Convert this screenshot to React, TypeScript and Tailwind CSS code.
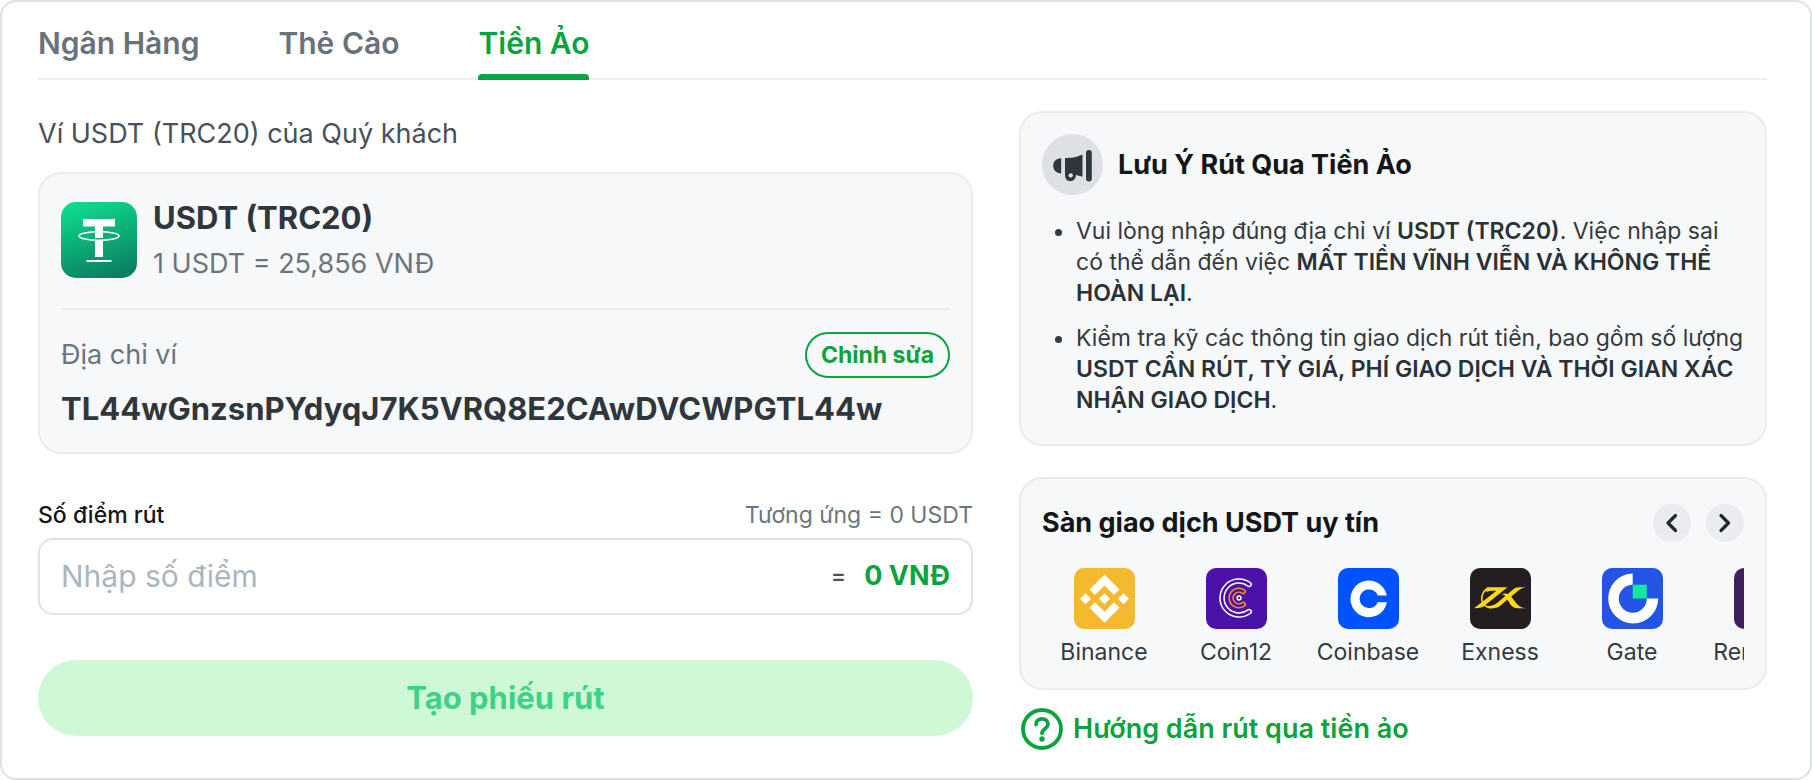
import { useRef, useState, type ReactNode } from "react";

function TetherLogo() {
  return (
    <svg viewBox="0 0 76 76" className="size-[76px] shrink-0" role="img" aria-label="USDT">
      <defs>
        <linearGradient id="tether" x1="0.35" y1="0" x2="0.65" y2="1">
          <stop offset="0" stopColor="#0fd88b" />
          <stop offset="1" stopColor="#0a7f63" />
        </linearGradient>
      </defs>
      <rect width="76" height="76" rx="15" fill="url(#tether)" />
      <path d="M22 17h32v7.600H42V36h-8V24.600H22z" fill="#fff" />
      <path d="M34 38h8v17h-8z" fill="#fff" />
      <ellipse cx="38" cy="34" rx="20" ry="4.200" fill="none" stroke="#fff" strokeWidth="1.500" />
      <path d="M25.500 58h25v1.900h-25z" fill="#fff" />
    </svg>
  );
}

function MegaphoneIcon() {
  return (
    <svg viewBox="0 0 61 61" className="size-[61px] shrink-0" aria-hidden="true">
      <circle cx="30.500" cy="30.500" r="30.500" fill="#dee0e5" />
      <g fill="#2f363c">
        <path d="M19.200 24.200v15.200c-5-.2-8-3.200-8-7.600s3-7.400 8-7.600z" />
        <path d="M23 24c6.500.2 12-.9 17.500-3.500v22.300L34 41c-.2 3.600-2.500 6.200-5.700 6.200S23 44.800 23 41z" />
        <rect x="44" y="16" width="5.800" height="31.500" rx="2.900" />
      </g>
      <path d="M26.600 41c1-.9 3.100-.9 4.200 0 0 1.500-.8 2.400-2.100 2.400s-2.100-.9-2.100-2.400z" fill="#dee0e5" />
      <circle cx="28.700" cy="41.200" r="2" fill="#dee0e5" />
    </svg>
  );
}

function BinanceLogo() {
  return (
    <svg viewBox="0 0 61 61" className="size-[61px]" aria-hidden="true">
      <rect width="61" height="61" rx="10" fill="#f3ba2f" />
      <g fill="#fff">
        <path d="M30.500 6.500 45.500 21.500l-5.500 5.500-9.500-9.500L21 27l-5.500-5.500z" />
        <path d="M30.500 54.800 45.500 39.800 40 34.300l-9.500 9.500-9.500-9.500-5.500 5.500z" />
        <path d="m30.500 25.200 5.500 5.500-5.500 5.500-5.500-5.500z" />
        <path d="m11.500 25.200 5.500 5.500-5.500 5.500L6 30.700z" />
        <path d="m49.500 25.200 5.500 5.500-5.500 5.500-5.500-5.500z" />
      </g>
    </svg>
  );
}

function Coin12Logo() {
  return (
    <svg viewBox="0 0 61 61" className="size-[61px]" aria-hidden="true">
      <rect width="61" height="61" rx="10" fill="#4c12a8" />
      <g fill="none" strokeLinecap="round">
        <path d="M43.200 16.400A17 17 0 1 0 43.200 43.600" stroke="#fff" strokeWidth="5.600" />
        <path d="M43.200 16.400A17 17 0 1 0 43.200 43.600" stroke="#4c12a8" strokeWidth="2.600" />
        <path d="M37.200 23.500A7.800 7.800 0 1 0 37.200 36.500" stroke="#f7931a" strokeWidth="5.600" />
        <path d="M37.200 23.500A7.800 7.800 0 1 0 37.200 36.500" stroke="#4c12a8" strokeWidth="2.400" />
      </g>
      <circle cx="33" cy="30" r="1.900" fill="none" stroke="#fff" strokeWidth="1.500" />
    </svg>
  );
}

function CoinbaseLogo() {
  return (
    <svg viewBox="0 0 61 61" className="size-[61px]" aria-hidden="true">
      <rect width="61" height="61" rx="10" fill="#0052ff" />
      <path
        d="M30.500 40a9.300 9.300 0 1 1 9.200-12.400h9.200a18.400 18.400 0 1 0 0 6.600h-9.200A9.300 9.300 0 0 1 30.500 40z"
        fill="#fff"
      />
    </svg>
  );
}

function ExnessLogo() {
  return (
    <svg viewBox="0 0 61 61" className="size-[61px]" aria-hidden="true">
      <rect width="61" height="61" rx="10" fill="#231f20" />
      <g fill="#ffd81c">
        <path d="M17 19.200h20.500L14 38c-2 1.500-5 2.200-10 2.200L26.500 22.700c-4.500-.2-7.500 0-10.500 1.300z" />
        <path d="M55.500 19.200H49c-2.500 0-4 .8-6 2.400L28 34.200c-3.500 3-7.500 4.300-11.500 3.600 3.500 3.400 10 3.200 14-.2l17-14.400c2-1.700 4-3 8-4z" />
        <path d="M31.500 26c4-1.300 7.500-.3 9.500 2.300l5.500 7.200c2.200 2.800 5 4.300 9.500 4.700h-8c-4 0-6.200-1.700-8-4.500l-4-6.400c-1.200-1.900-2.300-2.900-4.500-3.300z" />
      </g>
      <path d="M18.500 20C12 23 10 31 13.500 36c2.500 3.600 7.500 4.600 12.500 2.500" fill="none" stroke="#ffd81c" strokeWidth="1.600" />
    </svg>
  );
}

function GateLogo() {
  return (
    <svg viewBox="0 0 61 61" className="size-[61px]" aria-hidden="true">
      <rect width="61" height="61" rx="10" fill="#2354e6" />
      <path d="M30.700 5.500a25 25 0 1 0 25.500 25H44.800A14 14 0 1 1 30.700 16.700z" fill="#fff" />
      <path d="M30.700 16.700h14.100v13.800H30.700z" fill="#17e6a1" />
    </svg>
  );
}

function RemitanoLogo() {
  return (
    <svg viewBox="0 0 61 61" className="size-[61px]" aria-hidden="true">
      <rect width="61" height="61" rx="10" fill="#3f2160" />
    </svg>
  );
}

function Chevron({ d }: { d: string }) {
  return (
    <svg viewBox="0 0 38 38" className="size-[38px]" aria-hidden="true">
      <path d={d} fill="none" stroke="#22282c" strokeWidth="3.200" strokeLinecap="round" strokeLinejoin="round" />
    </svg>
  );
}

const tabs = ["Ngân Hàng", "Thẻ Cào", "Tiền Ảo"];

const exchanges: { name: string; logo: ReactNode }[] = [
  { name: "Binance", logo: <BinanceLogo /> },
  { name: "Coin12", logo: <Coin12Logo /> },
  { name: "Coinbase", logo: <CoinbaseLogo /> },
  { name: "Exness", logo: <ExnessLogo /> },
  { name: "Gate", logo: <GateLogo /> },
  { name: "Remitano", logo: <RemitanoLogo /> },
];

function Tabs() {
  const [active, setActive] = useState("Tiền Ảo");
  return (
    <div role="tablist" className="flex gap-[79px] border-b-2 border-[#eeeff2]">
      {tabs.map((tab) => (
        <button
          key={tab}
          type="button"
          role="tab"
          aria-selected={tab === active}
          onClick={() => setActive(tab)}
          className={
            tab === active
              ? "relative h-[76px] pt-[6px] text-[30px] font-semibold text-[#0ba33e] after:absolute after:inset-x-0 after:-bottom-[2px] after:h-[6px] after:rounded-t-[4px] after:bg-[#0ba33e]"
              : "relative h-[76px] pt-[6px] text-[30px] font-semibold text-[#69727b]"
          }
        >
          {tab}
        </button>
      ))}
    </div>
  );
}

function WalletCard() {
  return (
    <section className="rounded-[23px] border-2 border-[#e9ebef] bg-[#f7f8fa] px-[21px] pt-[28px] pb-[22px]">
      <div className="flex items-center gap-4 border-b-2 border-[#ebecef] pb-[30px]">
        <TetherLogo />
        <div className="flex h-[76px] flex-col justify-between">
          <h2 className="text-[31px] leading-[32px] font-bold text-[#2f363c]">USDT (TRC20)</h2>
          <p className="text-[27px] leading-[28px] text-[#6c757d]">1 USDT = 25,856 VNĐ</p>
        </div>
      </div>
      <div className="flex items-center justify-between pt-[22px]">
        <span className="text-[27px] leading-[30px] text-[#6c757d]">Địa chỉ ví</span>
        <button
          type="button"
          className="h-[46px] rounded-full border-2 border-[#0ba33e] px-[14px] text-[23px] leading-[30px] font-bold text-[#0ba33e]"
        >
          Chỉnh sửa
        </button>
      </div>
      <p className="mt-[10px] text-[31px] leading-[42px] font-bold break-all text-[#2f363c]">
        TL44wGnzsnPYdyqJ7K5VRQ8E2CAwDVCWPGTL44w
      </p>
    </section>
  );
}

function WithdrawForm() {
  return (
    <form className="mt-[46px]" onSubmit={(e) => e.preventDefault()}>
      <div className="flex justify-between text-[23px] leading-[30px]">
        <label htmlFor="points" className="font-medium text-[#141617]">
          Số điểm rút
        </label>
        <span className="text-[#6c757d]">Tương ứng = 0 USDT</span>
      </div>
      <div className="mt-2 flex h-[77px] items-center rounded-[15px] border-2 border-[#dfe2e6] px-[21px]">
        <input
          id="points"
          type="text"
          inputMode="numeric"
          placeholder="Nhập số điểm"
          className="min-w-0 flex-1 bg-transparent text-[30px] text-[#2f363c] outline-none placeholder:text-[#adb5bd]"
        />
        <span className="mr-[18px] text-[23px] font-medium text-[#495057]">=</span>
        <span className="text-[27px] font-bold text-[#0ba33e]">0 VNĐ</span>
      </div>
      <button
        type="submit"
        className="mt-[45px] h-[76px] w-full rounded-full bg-[#cff8d7] text-[31px] font-bold text-[#3dd387]"
      >
        Tạo phiếu rút
      </button>
    </form>
  );
}

function NoticeCard() {
  return (
    <section className="rounded-[23px] border-2 border-[#e9ebef] bg-[#f7f8fa] px-[21px] pt-[21px] pb-[28px]">
      <div className="flex items-center gap-[15px]">
        <MegaphoneIcon />
        <h2 className="text-[27px] leading-[30px] font-bold text-[#141617]">Lưu Ý Rút Qua Tiền Ảo</h2>
      </div>
      <ul className="mt-[21px] flex list-disc flex-col gap-[14px] pl-[34px] text-[23px] leading-[31px] text-[#343a40]">
        <li>
          Vui lòng nhập đúng địa chỉ ví <strong className="font-semibold text-[#2a3137]">USDT (TRC20)</strong>. Việc
          nhập sai có thể dẫn đến việc{" "}
          <strong className="font-semibold text-[#2a3137]">MẤT TIỀN VĨNH VIỄN VÀ KHÔNG THỂ HOÀN LẠI</strong>.
        </li>
        <li>
          Kiểm tra kỹ các thông tin giao dịch rút tiền, bao gồm số lượng{" "}
          <strong className="font-semibold text-[#2a3137]">
            USDT CẦN RÚT, TỶ GIÁ, PHÍ GIAO DỊCH VÀ THỜI GIAN XÁC NHẬN GIAO DỊCH
          </strong>
          .
        </li>
      </ul>
    </section>
  );
}

function ExchangesCard() {
  const track = useRef<HTMLUListElement>(null);
  const scroll = (by: number) => track.current?.scrollBy({ left: by, behavior: "smooth" });
  return (
    <section className="mt-[31px] rounded-[23px] border-2 border-[#e9ebef] bg-[#f7f8fa] px-[21px] pt-[25px] pb-[21px]">
      <div className="flex items-center justify-between">
        <h2 className="text-[27px] leading-[30px] font-bold text-[#141617]">Sàn giao dịch USDT uy tín</h2>
        <div className="flex gap-[15px]">
          <button type="button" aria-label="Trước" onClick={() => scroll(-132)} className="rounded-full bg-[#ebecef]">
            <Chevron d="M22.500 11.500 15 19l7.500 7.500" />
          </button>
          <button type="button" aria-label="Sau" onClick={() => scroll(132)} className="rounded-full bg-[#ebecef]">
            <Chevron d="M15 11.500 22.500 19 15 26.500" />
          </button>
        </div>
      </div>
      <ul ref={track} className="mt-[26px] flex gap-2 overflow-hidden">
        {exchanges.map(({ name, logo }) => (
          <li key={name} className="w-[124px] shrink-0">
            <a href="#" className="flex flex-col items-center gap-2 text-[23px] leading-[30px] text-[#343a40]">
              {logo}
              {name}
            </a>
          </li>
        ))}
      </ul>
    </section>
  );
}

export default function App() {
  return (
    <main className="rounded-[16px] border-2 border-[#dee1e5] bg-white px-9 pb-[28px] font-[Inter,sans-serif]">
      <div className="pr-[7px]">
        <Tabs />
        <div className="mt-[31px] grid grid-cols-[5fr_4fr] gap-[46px]">
          <div className="min-w-0">
            <h1 className="mt-[8px] mb-[23px] text-[27px] leading-[30px] text-[#495057]">
              Ví USDT (TRC20) của Quý khách
            </h1>
            <WalletCard />
            <WithdrawForm />
          </div>
          <div className="min-w-0">
            <NoticeCard />
            <ExchangesCard />
            <a
              href="#"
              className="mt-[18px] flex w-fit items-center gap-[10px] pl-[2px] text-[27px] leading-[30px] font-semibold text-[#0ba33e]"
            >
              <svg viewBox="0 0 42 42" className="size-[42px]" aria-hidden="true">
                <g fill="none" stroke="#0ba33e" strokeWidth="3.800" strokeLinecap="round" strokeLinejoin="round">
                  <circle cx="21" cy="21" r="19" />
                  <path d="M15 16.500c0-3.500 2.600-5.700 6-5.700s6 2.300 6 5.500c0 4.200-6 4.500-6 9" />
                </g>
                <circle cx="21" cy="31" r="2.700" fill="#0ba33e" />
              </svg>
              Hướng dẫn rút qua tiền ảo
            </a>
          </div>
        </div>
      </div>
    </main>
  );
}
